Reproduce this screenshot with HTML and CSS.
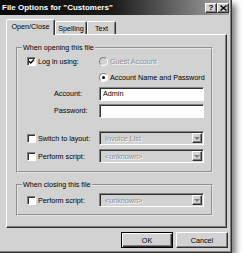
FILE: index.html
```html
<!DOCTYPE html>
<html lang="en">
<head>
    <meta charset="UTF-8">
    <meta name="viewport" content="width=device-width, initial-scale=1.0">
    <title>File Options</title>
    <link rel="stylesheet" href="styles.css">
</head>
<body>
    <div class="window">
        <div class="titlebar">
            <span class="title">File Options for "Customers"</span>
            <div class="caption-buttons">
                <span class="caption-btn">?</span>
                <span class="caption-btn">
                    <svg width="7" height="6" viewBox="0 0 7 6"><path d="M0.5 0.5 L6.5 5.5 M6.5 0.5 L0.5 5.5" stroke="#000" stroke-width="1.4"/></svg>
                </span>
            </div>
        </div>

        <div class="client">
            <div class="tabs">
                <div class="tab active">Open/Close</div>
                <div class="tab tab-spelling">Spelling</div>
                <div class="tab tab-text">Text</div>
            </div>

            <div class="panel">
                <fieldset class="group group-open">
                    <legend>When opening this file</legend>
                    <div class="row">
                        <label class="opt"><span class="check"><svg width="7" height="7" viewBox="0 0 7 7"><path d="M1 3.2 L2.8 5 L6 1.6" fill="none" stroke="#000" stroke-width="1.4"/></svg></span>Log in using:</label>
                        <label class="opt disabled"><span class="radio off"></span>Guest Account</label>
                    </div>
                    <div class="row">
                        <span></span>
                        <label class="opt"><span class="radio selected"></span>Account Name and Password</label>
                    </div>
                    <div class="row row-field">
                        <span class="field-label">Account:</span>
                        <input class="field" type="text" value="Admin">
                    </div>
                    <div class="row row-field">
                        <span class="field-label">Password:</span>
                        <input class="field" type="password" value="">
                    </div>
                    <div class="row row-combo spaced">
                        <label class="opt"><span class="check"></span>Switch to layout:</label>
                        <div class="combo"><span class="combo-text">Invoice List</span><span class="combo-btn"></span></div>
                    </div>
                    <div class="row row-combo">
                        <label class="opt"><span class="check"></span>Perform script:</label>
                        <div class="combo"><span class="combo-text">&lt;unknown&gt;</span><span class="combo-btn"></span></div>
                    </div>
                </fieldset>

                <fieldset class="group group-close">
                    <legend>When closing this file</legend>
                    <div class="row row-combo">
                        <label class="opt"><span class="check"></span>Perform script:</label>
                        <div class="combo"><span class="combo-text">&lt;unknown&gt;</span><span class="combo-btn"></span></div>
                    </div>
                </fieldset>
            </div>

            <div class="buttons">
                <button class="btn default">OK</button>
                <button class="btn">Cancel</button>
            </div>
        </div>
    </div>
</body>
</html>
```

FILE: styles.css
```css
* {
    box-sizing: border-box;
}
body {
    margin: 0;
    background: #fff;
    font-family: "Liberation Sans", Arial, sans-serif;
    font-size: 7.2px;
    line-height: 9px;
    color: #000;
}
.window {
    width: 232px;
    height: 253px;
    display: flex;
    flex-direction: column;
    padding: 0 2px 2px 0;
    background: #d2d2d2;
    border-right: 1px solid #303030;
    border-bottom: 1px solid #303030;
    box-shadow: inset -1px -1px 0 #808080, 4px 4px 6px rgba(0, 0, 0, 0.5);
}
.titlebar {
    height: 15px;
    display: flex;
    align-items: center;
    justify-content: space-between;
    padding-left: 2px;
    background: linear-gradient(to right, #080808, #1c1c1c 50%, #a6a6a6);
}
.title {
    color: #fff;
    font-weight: bold;
    font-size: 8px;
}
.caption-buttons {
    display: flex;
}
.caption-btn {
    width: 12px;
    height: 10px;
    display: flex;
    align-items: center;
    justify-content: center;
    background: #d2d2d2;
    border: 1px solid;
    border-color: #fff #303030 #303030 #fff;
    box-shadow: inset -1px -1px 0 #808080;
    font-weight: bold;
    font-size: 8px;
    line-height: 1;
}
.client {
    flex: 1;
    padding: 4px 0 0 6px;
}
.tabs {
    height: 16px;
    display: flex;
    align-items: flex-end;
}
.tab {
    height: 13px;
    margin-bottom: 1px;
    display: flex;
    align-items: center;
    justify-content: center;
    background: #d2d2d2;
    border: 1px solid;
    border-bottom: 0;
    border-color: #fff #303030 #303030 #fff;
    border-radius: 2px 2px 0 0;
    box-shadow: inset -1px 0 0 #808080;
}
.tab.active {
    width: 49px;
    height: 16px;
    margin-bottom: 0;
    padding-bottom: 2px;
}
.tab-spelling {
    width: 32px;
}
.tab-text {
    width: 29px;
}
.panel {
    width: 221px;
    height: 194px;
    margin-top: -1px;
    padding-left: 9px;
    border: 1px solid;
    border-color: #fff #303030 #303030 #fff;
    box-shadow: inset -1px -1px 0 #808080;
}
.group {
    width: 197px;
    margin: 8px 0 0;
    padding: 1px 0 6px 9px;
    border: 2px groove #e4e4e4;
    min-width: 0;
}
.group-close {
    margin-top: 7px;
    padding-top: 2px;
    padding-bottom: 5px;
}
.group legend {
    margin-left: -5px;
    padding: 0 1px;
    line-height: 9px;
}
.row {
    height: 16px;
    display: grid;
    grid-template-columns: 72px 105px;
    align-items: center;
}
.row-field {
    height: 17px;
}
.row-combo {
    height: 18px;
}
.spaced {
    margin-top: 10px;
}
.opt {
    display: flex;
    align-items: center;
    gap: 2px;
    white-space: nowrap;
}
.disabled {
    color: #8e8e8e;
    text-shadow: 1px 1px 0 #fff;
}
.check {
    width: 9px;
    height: 9px;
    display: flex;
    align-items: center;
    justify-content: center;
    background: #fff;
    border: 1px solid;
    border-color: #808080 #fff #fff #808080;
    box-shadow: inset 1px 1px 0 #303030;
    flex-shrink: 0;
}
.radio {
    width: 9px;
    height: 9px;
    display: flex;
    align-items: center;
    justify-content: center;
    border-radius: 50%;
    background: #fff;
    border: 1px solid;
    border-color: #808080 #fff #fff #808080;
    flex-shrink: 0;
}
.radio.off {
    background: #d2d2d2;
}
.radio.selected::after {
    content: "";
    width: 3px;
    height: 3px;
    border-radius: 50%;
    background: #000;
}
.field-label {
    padding-left: 27px;
}
.field {
    width: 105px;
    height: 14px;
    margin: 0;
    padding: 0 0 0 3px;
    font: inherit;
    color: #000;
    background: #fff;
    border: 1px solid;
    border-color: #808080 #fff #fff #808080;
    box-shadow: inset 1px 1px 0 #303030;
    outline: none;
}
.combo {
    width: 105px;
    height: 14px;
    display: flex;
    align-items: center;
    justify-content: space-between;
    padding: 0 1px 0 5px;
    background: #d2d2d2;
    border: 1px solid;
    border-color: #808080 #fff #fff #808080;
    box-shadow: inset 1px 1px 0 #303030;
}
.combo-text {
    color: #8e8e8e;
    text-shadow: 1px 1px 0 #fff;
}
.combo-btn {
    width: 10px;
    height: 10px;
    display: flex;
    align-items: center;
    justify-content: center;
    border: 1px solid;
    border-color: #fff #303030 #303030 #fff;
    box-shadow: inset -1px -1px 0 #808080;
}
.combo-btn::after {
    content: "";
    border-left: 3px solid transparent;
    border-right: 3px solid transparent;
    border-top: 3px solid #808080;
}
.buttons {
    display: flex;
    justify-content: flex-end;
    gap: 3px;
    margin-top: 4px;
    padding-right: 1px;
}
.btn {
    width: 52px;
    height: 16px;
    padding: 0;
    font: inherit;
    color: #000;
    background: #d2d2d2;
    border: 1px solid;
    border-color: #fff #303030 #303030 #fff;
    box-shadow: inset -1px -1px 0 #808080;
}
.btn.default {
    border-color: #000;
    box-shadow: inset 1px 1px 0 #fff, inset -1px -1px 0 #303030, inset -2px -2px 0 #808080;
}
```
